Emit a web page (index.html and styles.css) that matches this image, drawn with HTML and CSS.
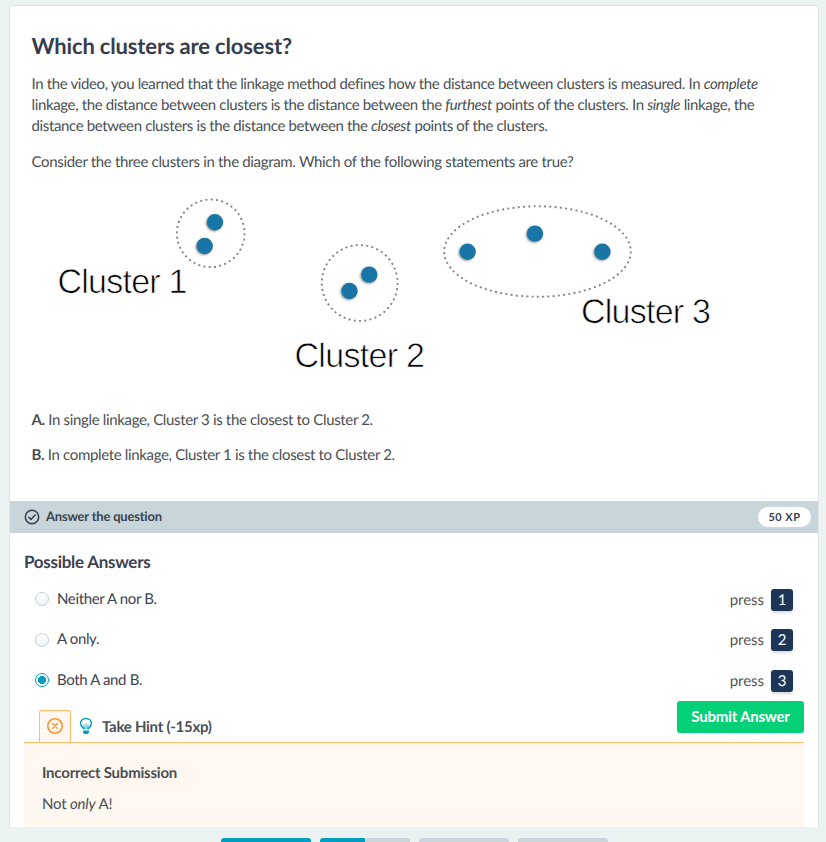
FILE: index.html
```
<!DOCTYPE html>
<html lang="en">
<head>
<meta charset="utf-8">
<title>Which clusters are closest?</title>
<link rel="stylesheet" href="styles.css">
</head>
<body>
<main class="card">
  <section class="assignment">
    <h1>Which clusters are closest?</h1>
    <p class="intro">In the video, you learned that the linkage method defines how the distance between clusters is measured. In <em>complete</em> linkage, the distance between clusters is the distance between the <em>furthest</em> points of the clusters. In <em>single</em> linkage, the distance between clusters is the distance between the <em>closest</em> points of the clusters.</p>
    <p>Consider the three clusters in the diagram. Which of the following statements are true?</p>
    <svg class="diagram" width="764" height="208" viewBox="32 187 764 208">
      <g class="outline">
        <circle cx="210.700" cy="233.300" r="33.800" pathLength="200"/>
        <circle cx="359.700" cy="283" r="37.900" pathLength="225"/>
        <ellipse cx="537.500" cy="251.500" rx="93.300" ry="45.200" pathLength="425"/>
      </g>
      <g class="points">
        <circle cx="215" cy="222.300" r="8.200"/>
        <circle cx="204.700" cy="246" r="8.200"/>
        <circle cx="369.300" cy="274.600" r="8.200"/>
        <circle cx="349.500" cy="291" r="8.200"/>
        <circle cx="467.600" cy="251.700" r="8.200"/>
        <circle cx="535" cy="233.600" r="8.200"/>
        <circle cx="602.400" cy="251.700" r="8.200"/>
      </g>
      <g class="labels">
        <text x="57.500" y="293" textLength="130" lengthAdjust="spacing">Cluster 1</text>
        <text x="294.500" y="366.500" textLength="130.500" lengthAdjust="spacing">Cluster 2</text>
        <text x="581" y="322.500" textLength="130" lengthAdjust="spacing">Cluster 3</text>
      </g>
    </svg>
    <p class="statement"><strong>A.</strong> In single linkage, Cluster 3 is the closest to Cluster 2.</p>
    <p class="statement"><strong>B.</strong> In complete linkage, Cluster 1 is the closest to Cluster 2.</p>
  </section>

  <header class="bar">
    <svg class="bar-icon" width="16" height="16" viewBox="0 0 16 16"><circle cx="8" cy="8" r="6.700"/><path d="M4.800 8.300l2.200 2.100 4.100-4.300"/></svg>
    <span class="bar-title">Answer the question</span>
    <span class="xp">50 XP</span>
  </header>

  <section class="answers">
    <h2>Possible Answers</h2>
    <ul>
      <li><span class="radio"></span><span class="choice">Neither A nor B.</span><span class="press">press</span><kbd>1</kbd></li>
      <li><span class="radio"></span><span class="choice">A only.</span><span class="press">press</span><kbd>2</kbd></li>
      <li><span class="radio checked"></span><span class="choice">Both A and B.</span><span class="press">press</span><kbd>3</kbd></li>
    </ul>
    <div class="actions">
      <div class="tab"><svg width="16" height="16" viewBox="0 0 16 16"><circle cx="8" cy="8" r="7.200"/><path d="M5.800 5.800l4.400 4.400M10.200 5.800l-4.400 4.400"/></svg></div>
      <svg class="bulb" width="14" height="18" viewBox="0 0 14 18"><path class="glass" d="M4.700 12.200C4.500 10 1.600 9.500 1.600 6.400 1.600 3.400 3.900 1.400 7 1.400s5.400 2 5.400 5c0 3.100-2.900 3.600-3.100 5.800"/><path class="filament" d="M7 12.500V6.200M4.800 7.600L5.600 12M9.200 7.600L8.400 12"/><path class="base" d="M4 13.500h6v1.300a3 2.300 0 0 1-6 0z"/></svg>
      <span class="hint">Take Hint (-15xp)</span>
      <button class="submit" type="button">Submit Answer</button>
    </div>
    <div class="feedback">
      <h3>Incorrect Submission</h3>
      <p>Not <em>only</em> A!</p>
    </div>
  </section>
</main>
<footer class="progress"><span class="done"></span><span class="half"></span><span></span><span></span></footer>
</body>
</html>
```

FILE: styles.css
```
* { box-sizing: border-box; }
body {
  margin: 0;
  height: 842px;
  overflow: hidden;
  background: #ebf2f2;
  color: #4a4f53;
  font: 15px/21px Lato, sans-serif;
  text-rendering: geometricPrecision;
}
h1, h2, h3, p, ul { margin: 0; padding: 0; }
.card {
  width: 810px;
  height: 822px;
  margin: 5px 0 0 9px;
  border: 1px solid #dfe6e8;
  border-bottom: 0;
  border-radius: 3px 3px 0 0;
  background: #fff;
}
.assignment { height: 495px; padding: 25px 22px 0 21.500px; }
h1 {
  margin-bottom: 13px;
  color: #363d4b;
  font-size: 22px;
  line-height: 30px;
  font-weight: 700;
  letter-spacing: -.16px;
}
.assignment p { margin-bottom: 15px; letter-spacing: -.325px; }
.assignment .intro { letter-spacing: -.365px; }
.assignment .statement { margin-bottom: 14px; letter-spacing: -.34px; }
.diagram { display: block; margin: -1px 0 15px .500px; }
.outline { fill: none; stroke: #858585; stroke-width: 1.900; stroke-dasharray: 1.900 3.100; }
.points { fill: #1975a6; filter: drop-shadow(-0.500px 1.500px 1px rgba(0, 0, 0, .4)); }
.labels { fill: #000; stroke: #fff; stroke-width: .7; font: 34px "Liberation Sans", sans-serif; }
.bar {
  display: flex;
  align-items: center;
  height: 32px;
  padding: 0 7px 0 14px;
  background: #c8d6db;
  color: #3a424e;
}
.bar-icon { margin-right: 6px; fill: none; stroke: #363d4b; stroke-width: 1.500; stroke-linecap: round; stroke-linejoin: round; }
.bar-title { flex: 1; margin-top: -1px; font-size: 13px; font-weight: 700; letter-spacing: -.2px; }
.xp {
  width: 53px;
  height: 20px;
  border-radius: 10px;
  background: #fff;
  color: #3a3f51;
  font-size: 11px;
  line-height: 21px;
  font-weight: 700;
  letter-spacing: .5px;
  text-align: center;
}
.answers { padding: 18px 14px 0; }
h2 { margin-bottom: 7px; color: #3c4350; font-size: 17px; line-height: 21px; font-weight: 700; letter-spacing: -.28px; }
ul { list-style: none; }
li { display: flex; align-items: center; height: 40.500px; padding: 0 11px; color: #3c4350; }
.radio {
  width: 14px;
  height: 14px;
  margin-right: 8px;
  border: 1px solid #c5ced5;
  border-radius: 50%;
  background: linear-gradient(#fff, #eaf5f7);
}
.radio.checked { border-color: #009fc0; background: radial-gradient(circle, #009fc0 3.800px, #fff 4.300px); }
.choice { flex: 1; letter-spacing: -.36px; }
.press { position: relative; top: 1px; margin-right: 7px; color: #555; letter-spacing: -.05px; }
kbd {
  width: 22px;
  height: 22px;
  position: relative;
  top: .500px;
  border-radius: 3px;
  background: #1d3557;
  box-shadow: 0 2px 3px rgba(0, 0, 0, .15);
  color: #fff;
  font: 15px/22px Lato, sans-serif;
  text-align: center;
}
.actions { display: flex; height: 42px; padding-left: 15px; border-bottom: 1px solid #ffbc6a; }
.tab {
  width: 32px;
  height: 32px;
  margin-top: 9px;
  padding: 7px 7px 0;
  border: 1px solid #ffbc6a;
  border-bottom: 0;
  border-radius: 3px 3px 0 0;
  background: #fff7f0;
}
.tab svg { display: block; fill: none; stroke: #ff9332; stroke-width: 1.600; stroke-linecap: round; }
.bulb { margin: 16px 9px 0 8px; fill: none; stroke: #009fc0; }
.glass { stroke-width: 1.500; }
.filament { stroke-width: .8; }
.base { fill: #009fc0; stroke: none; }
.hint { flex: 1; margin-top: 16px; font-weight: 700; font-size: 15px; letter-spacing: -.27px; }
.submit {
  width: 127px;
  height: 32px;
  padding: 0;
  border: 0;
  border-radius: 3px;
  background: #03d077;
  color: #fff;
  font: 700 15px/31px Lato, sans-serif;
  letter-spacing: -.2px;
}
.feedback { height: 84px; padding: 20px 18px; background: #fff7f0; font-size: 15px; letter-spacing: -.22px; }
h3 { margin-bottom: 10px; font-size: 15px; line-height: 21px; font-weight: 700; }
.progress { display: flex; justify-content: center; gap: 9px; padding: 11px 0 0 3px; }
.progress span { width: 90px; height: 8px; border-radius: 3px; background: #c8d6db; }
.progress .done { background: #009fc0; }
.progress .half { background: linear-gradient(to right, #009fc0 50%, #c8d6db 50%); }
```
